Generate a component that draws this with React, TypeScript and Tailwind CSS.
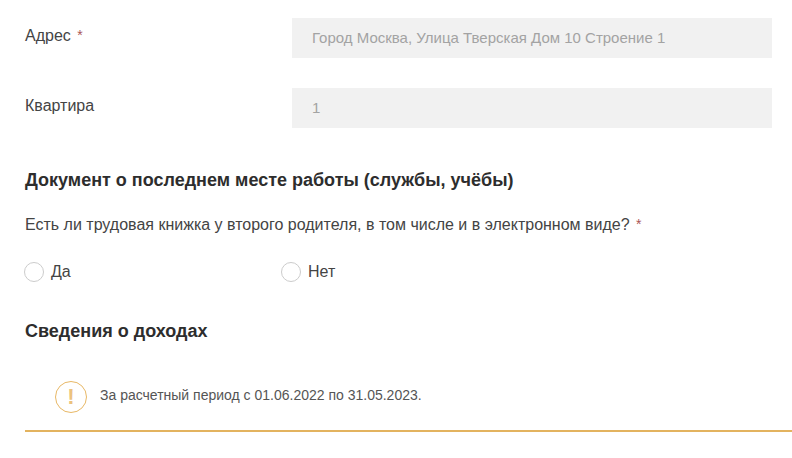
export default function App() {
  return (
    <div className="w-[792px] h-[458px] overflow-hidden bg-white pl-[25px] text-[#333333] font-['Liberation_Sans',Arial,sans-serif]">
      <div className="flex pt-[18px] pr-5">
        <div className="w-[267px] pt-[8px] text-[16px] leading-[20px] text-[#444444]">
          Адрес <span className="ml-[2px] align-[1px] text-[14px] leading-none text-[#a55]">*</span>
        </div>
        <div className="flex h-10 flex-1 items-center bg-[#f1f1f1] pl-5 pt-px text-[15px] text-[#a3a3a3]">
          Город Москва, Улица Тверская Дом 10 Строение 1
        </div>
      </div>
      <div className="flex pt-[30px] pr-5">
        <div className="w-[267px] pt-[8px] text-[16px] leading-[20px] text-[#444444]">Квартира</div>
        <div className="flex h-10 flex-1 items-center bg-[#f1f1f1] pl-5 pt-px text-[15px] text-[#a3a3a3]">1</div>
      </div>
      <h2 className="mt-[41px] text-[18px] font-bold leading-[22px] text-[#2d2d2d]">
        Документ о последнем месте работы (службы, учёбы)
      </h2>
      <p className="mt-[24px] text-[16px] leading-[20px] text-[#444444]">
        Есть ли трудовая книжка у второго родителя, в том числе и в электронном виде? <span className="ml-[2px] align-[1px] text-[14px] leading-none text-[#a55]">*</span>
      </p>
      <div className="-ml-px mt-[27px] flex items-center text-[16px] leading-[20px] text-[#444444]">
        <div className="flex w-[257px] items-center gap-[7px]">
          <span className="h-5 w-5 rounded-full border border-[#cccccc] bg-white" />
          Да
        </div>
        <div className="flex items-center gap-[7px]">
          <span className="h-5 w-5 rounded-full border border-[#cccccc] bg-white" />
          Нет
        </div>
      </div>
      <h2 className="mt-[38px] text-[18px] font-bold leading-[22px] text-[#2d2d2d]">Сведения о доходах</h2>
      <div className="mt-[28px] flex h-[62px] items-center border-b-2 border-[#e3b35f] pb-[7px] pl-[30px] text-[14px] text-[#555555]">
        <span className="flex h-8 w-8 items-center justify-center rounded-full border border-[#e8b866] text-[22px] font-bold leading-none text-[#ecc27e]">
          !
        </span>
        <span className="ml-[13px] -mt-[2px]">За расчетный период с 01.06.2022 по 31.05.2023.</span>
      </div>
    </div>
  );
}
